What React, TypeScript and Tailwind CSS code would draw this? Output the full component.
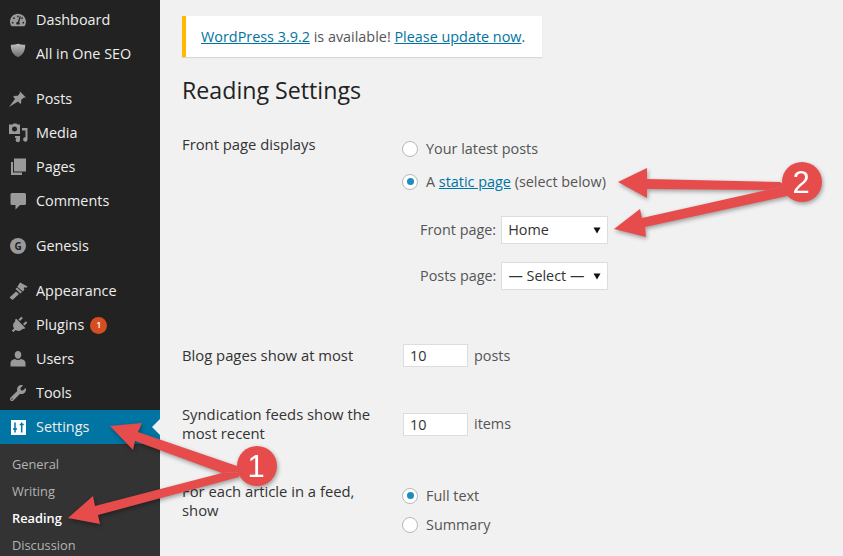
import { FaTachometerAlt, FaPlug, FaWrench } from "react-icons/fa";
import type { ReactNode } from "react";

const icon = "w-5 h-5 text-[#9a9a9a]";

function ShieldIcon() {
  return (
    <svg viewBox="0 0 20 20" className="w-[18px] h-[18px] ml-px -translate-y-[3px]">
      <defs>
        <linearGradient id="seo" x1="0" y1="0" x2="0" y2="1">
          <stop offset="0" stopColor="#c0c0c0" />
          <stop offset="1" stopColor="#6a6a6a" />
        </linearGradient>
      </defs>
      <path d="M10 2c3 1 5.500 1.300 8 1 0 7-2.400 11-8 14C4.400 14 2 10 2 3c2.500.3 5 0 8-1z" fill="url(#seo)" />
    </svg>
  );
}

function PinIcon() {
  return (
    <svg viewBox="0 0 20 20" className={icon} fill="currentColor">
      <path d="M1 18l6-8-2-2.500c2-1 3.500-1 4.500-.5L12 4l-.5-2L18 8.500h-2L13 11c.5 1 .5 2.500-.5 4L10 12.500 1 18z" />
    </svg>
  );
}

function MediaIcon() {
  return (
    <svg viewBox="0 0 20 20" className={icon} fill="currentColor">
      <path
        d="M1 1.500h3.500l1-1h3l1 1H12V11H1V1.500zM6.500 3.500a2.500 2.500 0 1 0 0 5 2.500 2.500 0 0 0 0-5z"
        fillRule="evenodd"
      />
      <path d="M14 5h5.500v11.500a2.200 2.200 0 1 1-2-2.200V7.500H14V5zM7 13h5v4a2.200 2.200 0 1 1-2-2.200V15H7v-2z" />
    </svg>
  );
}

function PagesIcon() {
  return (
    <svg viewBox="0 0 20 20" className={icon} fill="currentColor">
      <path d="M6 1.500h12v13H6v-13z" />
      <path d="M3 5h2v10.500h9V18H3V5z" />
    </svg>
  );
}

function CommentIcon() {
  return (
    <svg viewBox="0 0 20 20" className={icon} fill="currentColor">
      <path d="M4 2h12.500a1.500 1.500 0 0 1 1.500 1.500v9a1.500 1.500 0 0 1-1.500 1.500H12l-4.500 4.500V14H4a1.500 1.500 0 0 1-1.500-1.500v-9A1.500 1.500 0 0 1 4 2z" />
    </svg>
  );
}

function GenesisIcon() {
  return (
    <svg viewBox="0 0 20 20" className="w-5 h-5">
      <circle cx="10" cy="10" r="8" fill="#9a9a9a" />
      <text x="10" y="13.500" textAnchor="middle" fontSize="10" fontWeight="700" fill="#222" fontFamily="Open Sans, sans-serif">G</text>
    </svg>
  );
}

function BrushIcon() {
  return (
    <svg viewBox="0 0 20 20" className={icon} fill="currentColor">
      <path d="M1.500 16.500l6.500-6 3 2.500-6.500 6-3-2.500z" />
      <path d="M7.500 8l1.500-1.500 5 4.500-1.500 1.500-5-4.500z" />
      <path d="M9.500 5.500L12 1.500l7.500 4-1 1.200-2-.5-.8 1 .8 1.300-1.500 2-5.500-4.500z" />
    </svg>
  );
}

function UserIcon() {
  return (
    <svg viewBox="0 0 20 20" className={icon} fill="currentColor">
      <path d="M10 2c2 0 3.300 1.500 3.300 3.700S12 9.700 10 9.700 6.700 7.900 6.700 5.700 8 2 10 2z" />
      <path d="M7 10c1.800 1.200 4.200 1.200 6 0 2.300.5 4.500 1.600 4.500 4v3.500h-15V14c0-2.400 2.200-3.500 4.500-4z" />
    </svg>
  );
}

function SettingsIcon() {
  return (
    <svg viewBox="0 0 20 20" className="w-5 h-5 text-white">
      <path d="M3 3h15v15H3z" fill="currentColor" />
      <path d="M7 5.500v10M13.700 5.500v10M5 12h4M11.700 7.500h4" stroke="#0074a2" strokeWidth="1.500" fill="none" />
    </svg>
  );
}

function MenuItem({ label, children, badge }: { label: string; children: ReactNode; badge?: string }) {
  return (
    <div className="flex items-center h-[34px] pl-[8px] text-[#eee]">
      <div className="w-[28px] flex items-center justify-start">{children}</div>
      <span>{label}</span>
      {badge && (
        <span className="ml-[6px] w-[17px] h-[17px] rounded-full bg-[#d54e21] text-white text-[9px] font-semibold flex items-center justify-center">
          {badge}
        </span>
      )}
    </div>
  );
}

function Sidebar() {
  return (
    <aside className="w-[160px] h-[556px] shrink-0 bg-[#222] text-[14.4px] overflow-hidden pt-[3px]">
      <MenuItem label="Dashboard"><FaTachometerAlt className="w-[16px] h-[16px] ml-[2px] text-[#9a9a9a]" /></MenuItem>
      <MenuItem label="All in One SEO"><ShieldIcon /></MenuItem>
      <div className="h-[11px]" />
      <MenuItem label="Posts"><PinIcon /></MenuItem>
      <MenuItem label="Media"><MediaIcon /></MenuItem>
      <MenuItem label="Pages"><PagesIcon /></MenuItem>
      <MenuItem label="Comments"><CommentIcon /></MenuItem>
      <div className="h-[11px]" />
      <MenuItem label="Genesis"><GenesisIcon /></MenuItem>
      <div className="h-[11px]" />
      <MenuItem label="Appearance"><BrushIcon /></MenuItem>
      <MenuItem label="Plugins" badge="1"><FaPlug className="w-[17px] h-[17px] ml-[2px] rotate-45 text-[#9a9a9a]" /></MenuItem>
      <MenuItem label="Users"><UserIcon /></MenuItem>
      <MenuItem label="Tools"><FaWrench className="w-[16px] h-[16px] ml-[2px] text-[#9a9a9a]" /></MenuItem>
      <div className="relative bg-[#0074a2]">
        <MenuItem label="Settings"><SettingsIcon /></MenuItem>
        <div className="absolute right-0 top-[9px] w-0 h-0 border-y-[8px] border-y-transparent border-r-[8px] border-r-[#f1f1f1]" />
      </div>
      <div className="bg-[#333] h-[120px] pt-[7px] text-[12.8px] text-[#b4b4b4] pl-[12px]">
        <div className="h-[27px] leading-[27px]">General</div>
        <div className="h-[27px] leading-[27px]">Writing</div>
        <div className="h-[27px] leading-[27px] text-white font-semibold">Reading</div>
        <div className="h-[27px] leading-[27px]">Discussion</div>
      </div>
    </aside>
  );
}

function Radio({ checked, label }: { checked?: boolean; label: ReactNode }) {
  return (
    <div className="flex items-center gap-[8px] h-[19px]">
      <span className="w-[16px] h-[16px] rounded-full bg-white border border-[#b4b9be] flex items-center justify-center shrink-0">
        {checked && <span className="w-[7px] h-[7px] rounded-full bg-[#1e8cbe]" />}
      </span>
      <span>{label}</span>
    </div>
  );
}

function FakeSelect({ value }: { value: string }) {
  return (
    <div className="w-[107px] h-[28px] bg-white border border-[#ddd] flex items-center justify-between pl-[6px] pr-[6px] text-[#333]">
      <span>{value}</span>
      <svg viewBox="0 0 8 8" className="w-[8px] h-[8px]">
        <path d="M.5 1.500h7L4 7.500z" fill="#111" />
      </svg>
    </div>
  );
}

function NumberBox({ unit }: { unit: string }) {
  return (
    <div className="flex items-center gap-[6px] ml-px">
      <input
        readOnly
        defaultValue="10"
        className="w-[65px] h-[23px] bg-white border border-[#ddd] px-[6px] text-[#333] outline-none"
      />
      <span>{unit}</span>
    </div>
  );
}

function Annotations() {
  const red = "#e74c4c";
  return (
    <svg
      viewBox="0 0 843 556"
      className="absolute inset-0 w-[843px] h-[556px] pointer-events-none [filter:drop-shadow(1px_2px_2px_rgba(0,0,0,0.35))]"
    >
      <polygon fill={red} points="110,426 142,423 138,432 237,466 240,472 222,473 135,441 133,450" />
      <polygon fill={red} points="68,518 93,496 95,506 222,473 240,472 239,477 98,515 100,524" />
      <polygon fill={red} points="618,182 647,168 647,179 780,182 786,186 767,190 647,189 647,198" />
      <polygon fill={red} points="614,229 640,209 642,218 767,190 786,186 787,196 645,227 646,237" />
      <circle cx="257" cy="466" r="20" fill={red} />
      <circle cx="802" cy="182" r="20" fill={red} />
      <text x="256" y="477" textAnchor="middle" fontSize="31" fill="#fff" fontFamily="Liberation Sans, sans-serif">1</text>
      <text x="801" y="193" textAnchor="middle" fontSize="31" fill="#fff" fontFamily="Liberation Sans, sans-serif">2</text>
    </svg>
  );
}

const labelClass = "w-[195px] text-[#333] text-[14.8px] leading-[19px] font-medium";

export default function App() {
  const link = "text-[#0074a2] underline";
  return (
    <div className="relative flex w-[843px] h-[556px] overflow-hidden bg-[#f1f1f1] font-['Open_Sans',sans-serif] text-[14.4px] text-[#555]">
      <Sidebar />
      <main className="flex-1 pl-[22px] pt-[16px]">
        {/* Update notice */}
        <div className="w-[360px] h-[41px] bg-white border-l-4 border-[#ffba00] shadow-[0_1px_1px_rgba(0,0,0,0.1)] pl-[15px] flex items-center">
          <span>
            <a className={link}>WordPress 3.9.2</a> is available! <a className={link}>Please update now</a>.
          </span>
        </div>
        <h1 className="text-[23.2px] leading-[29px] text-[#222] mt-[19px]">Reading Settings</h1>

        <div className="grid grid-cols-[220px_1fr] mt-[30px]">
          <div className={labelClass}>Front page displays</div>
          <div className="pt-[4px]">
            <Radio label="Your latest posts" />
            <div className="mt-[14px]">
              <Radio checked label={<>A <a className={link}>static page</a> (select below)</>} />
            </div>
            <div className="flex items-center mt-[25px] pl-[18px] gap-[5px]">
              <span>Front page:</span>
              <FakeSelect value="Home" />
            </div>
            <div className="flex items-center mt-[18px] pl-[18px] gap-[5px]">
              <span>Posts page:</span>
              <FakeSelect value="— Select —" />
            </div>
          </div>
        </div>

        <div className="grid grid-cols-[220px_1fr] mt-[54px]">
          <div className={`${labelClass} pt-[2px]`}>Blog pages show at most</div>
          <NumberBox unit="posts" />
        </div>

        <div className="grid grid-cols-[220px_1fr] mt-[38px]">
          <div className={labelClass}>Syndication feeds show the most recent</div>
          <NumberBox unit="items" />
        </div>

        <div className="grid grid-cols-[220px_1fr] mt-[39px]">
          <div className={labelClass}>For each article in a feed, show</div>
          <div className="pt-[4px]">
            <Radio checked label="Full text" />
            <div className="mt-[10px]">
              <Radio label="Summary" />
            </div>
          </div>
        </div>
      </main>
      <Annotations />
    </div>
  );
}
